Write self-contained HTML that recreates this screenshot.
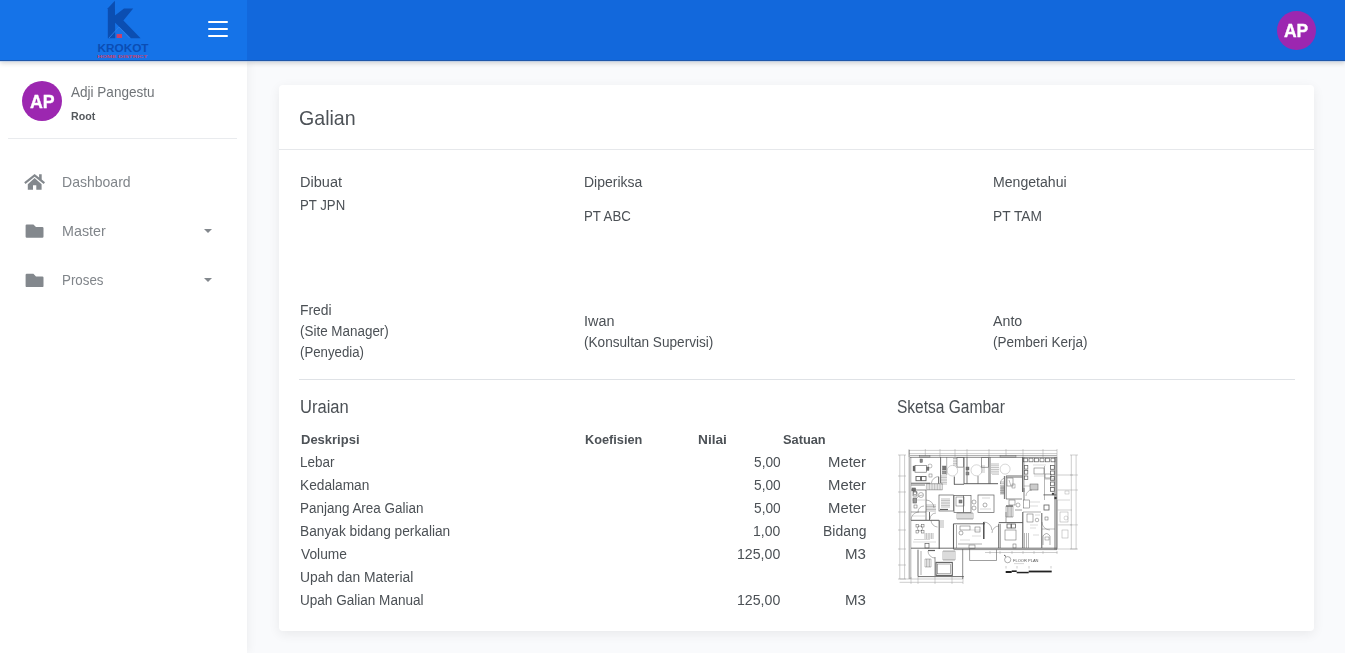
<!DOCTYPE html>
<html><head><meta charset="utf-8">
<style>
*{box-sizing:border-box;margin:0;padding:0}
html,body{width:1345px;height:653px;overflow:hidden}
body{background:#f9fafc;font-family:"Liberation Sans",sans-serif;color:#495057;position:relative}
#nav{position:absolute;left:0;top:0;width:1345px;height:61px;background:#1268dc;border-bottom:1px solid #1f57aa;box-shadow:0 2px 5px rgba(0,0,0,.18);z-index:5}
#brand{position:absolute;left:0;top:0;width:247px;height:60px;background:#1573e8}
#side{position:absolute;left:0;top:61px;width:247px;height:592px;background:#fff;box-shadow:1px 0 10px rgba(0,0,0,.06);z-index:2}
#card{position:absolute;left:279px;top:85px;width:1035px;height:546px;background:#fff;border-radius:4px;box-shadow:0 3px 12px rgba(0,0,0,.07)}
.t{position:absolute;white-space:nowrap;color:#52575c;z-index:10;transform-origin:0 0}
.av{position:absolute;width:40px;height:40px;border-radius:50%;background:#9c27b0}
.hb{position:absolute;left:208px;width:20px;height:2px;background:#fff;border-radius:1px}
.sv{position:absolute}
</style></head><body>
<div id="nav">
  <div id="brand">
    <svg class="sv" style="left:90px;top:0" width="66" height="61" viewBox="90 0 66 61">
      <g fill="#0b4eb2">
        <polygon points="107.8,8.2 114.9,0.8 115.2,38.2 107.8,38.2"/>
        <polygon points="114.9,15.6 124,8.6 133.2,8.6 123.4,20.6 140.6,38.2 131,38.2 114.9,22.4"/>
      </g>
      <polyline points="109,38 119,27 129.5,38" fill="none" stroke="#2f7fe6" stroke-width="0.9"/>
      <rect x="116.6" y="34" width="5.4" height="4" fill="#c9406a"/>
      <text x="123" y="52.3" text-anchor="middle" font-family="Liberation Sans" font-weight="bold" font-size="11.8" fill="#0b4db4" textLength="51" lengthAdjust="spacingAndGlyphs">KROKOT</text>
      <text x="97.3" y="57.6" font-family="Liberation Sans" font-weight="bold" font-size="4.2" fill="#c4426f" textLength="50" lengthAdjust="spacingAndGlyphs">HOME DISTRICT</text>
    </svg>
    <div class="hb" style="top:21px"></div>
    <div class="hb" style="top:28px"></div>
    <div class="hb" style="top:35px"></div>
  </div>
  <div class="av" style="left:1276.5px;top:10.5px;width:39.5px;height:39.5px"></div>
<!--NAVTEXT-->
</div>
<div style="position:absolute;left:0;top:61px;width:1345px;height:1px;background:rgba(150,190,245,.35);z-index:6"></div>
<div id="side">
  <div class="av" style="left:22px;top:20px"></div>
  <div style="position:absolute;left:8px;top:77px;width:229px;height:1px;background:#e9ebee"></div>
  <svg class="sv" style="left:20px;top:110px" width="30" height="30" viewBox="20 171 30 30">
    <g fill="#83888d">
      <polygon points="24.2,182.2 34.6,173.9 39.1,177.5 39.1,174.2 41.7,174.2 41.7,179.6 45,182.2 43.7,183.9 34.6,176.7 25.5,183.9"/>
      <polygon points="27.8,184.3 34.6,178.0 41.6,184.3 41.6,189.8 36.3,189.8 36.3,185.3 33,185.3 33,189.8 27.8,189.8"/>
    </g>
  </svg>
  <svg class="sv" style="left:20px;top:160px" width="30" height="30" viewBox="20 221 30 30">
    <path fill="#83888d" d="M25.6,225.6 a1.2,1.2 0 0 1 1.2,-1.2 h6.6 l2.6,2.6 h6.3 a1.2,1.2 0 0 1 1.2,1.2 v8.3 a1.2,1.2 0 0 1 -1.2,1.2 h-15.5 a1.2,1.2 0 0 1 -1.2,-1.2 z"/>
  </svg>
  <svg class="sv" style="left:20px;top:209px" width="30" height="30" viewBox="20 270 30 30">
    <path fill="#83888d" d="M25.6,275 a1.2,1.2 0 0 1 1.2,-1.2 h6.6 l2.6,2.6 h6.3 a1.2,1.2 0 0 1 1.2,1.2 v8.3 a1.2,1.2 0 0 1 -1.2,1.2 h-15.5 a1.2,1.2 0 0 1 -1.2,-1.2 z"/>
  </svg>
  <svg class="sv" style="left:200px;top:165px" width="16" height="10" viewBox="200 226 16 10">
    <polygon points="204,229 212,229 208,233" fill="#83888d"/>
  </svg>
  <svg class="sv" style="left:200px;top:214px" width="16" height="10" viewBox="200 275 16 10">
    <polygon points="204,278 212,278 208,282" fill="#83888d"/>
  </svg>
<!--SIDETEXT-->
</div>
<div id="card"></div>
<div style="position:absolute;left:279px;top:149px;width:1035px;height:1px;background:#e6e8eb"></div>
<div style="position:absolute;left:299px;top:379px;width:996px;height:1px;background:#dfe2e6"></div>
<svg class="sv" style="left:895px;top:445px;z-index:3;filter:blur(0.25px)" width="190" height="140" viewBox="895 445 190 140">
<g stroke="#5e5e5e" fill="none">
<line x1="909" y1="450.4" x2="1057" y2="450.4" stroke-width="0.5" stroke="#9a9a9a"/>
<line x1="909" y1="453.6" x2="1057" y2="453.6" stroke-width="0.5" stroke="#9a9a9a"/>
<line x1="909" y1="449" x2="909" y2="457" stroke-width="0.5" stroke="#9a9a9a"/>
<line x1="925.3" y1="449" x2="925.3" y2="457" stroke-width="0.5" stroke="#9a9a9a"/>
<line x1="940" y1="449" x2="940" y2="457" stroke-width="0.5" stroke="#9a9a9a"/>
<line x1="955" y1="449" x2="955" y2="457" stroke-width="0.5" stroke="#9a9a9a"/>
<line x1="967" y1="449" x2="967" y2="457" stroke-width="0.5" stroke="#9a9a9a"/>
<line x1="989" y1="449" x2="989" y2="457" stroke-width="0.5" stroke="#9a9a9a"/>
<line x1="1006" y1="449" x2="1006" y2="457" stroke-width="0.5" stroke="#9a9a9a"/>
<line x1="1023" y1="449" x2="1023" y2="457" stroke-width="0.5" stroke="#9a9a9a"/>
<line x1="1043" y1="449" x2="1043" y2="457" stroke-width="0.5" stroke="#9a9a9a"/>
<line x1="1057" y1="449" x2="1057" y2="457" stroke-width="0.5" stroke="#9a9a9a"/>
<line x1="899.8" y1="455" x2="899.8" y2="579" stroke-width="0.5" stroke="#9a9a9a"/>
<line x1="904.6" y1="455" x2="904.6" y2="579" stroke-width="0.5" stroke="#9a9a9a"/>
<line x1="898" y1="455" x2="906" y2="455" stroke-width="0.5" stroke="#9a9a9a"/>
<line x1="898" y1="476" x2="906" y2="476" stroke-width="0.5" stroke="#9a9a9a"/>
<line x1="898" y1="492" x2="906" y2="492" stroke-width="0.5" stroke="#9a9a9a"/>
<line x1="898" y1="512" x2="906" y2="512" stroke-width="0.5" stroke="#9a9a9a"/>
<line x1="898" y1="530" x2="906" y2="530" stroke-width="0.5" stroke="#9a9a9a"/>
<line x1="898" y1="549" x2="906" y2="549" stroke-width="0.5" stroke="#9a9a9a"/>
<line x1="898" y1="565" x2="906" y2="565" stroke-width="0.5" stroke="#9a9a9a"/>
<line x1="898" y1="579" x2="906" y2="579" stroke-width="0.5" stroke="#9a9a9a"/>
<line x1="1071.3" y1="455" x2="1071.3" y2="549" stroke-width="0.5" stroke="#9a9a9a"/>
<line x1="1076.1" y1="455" x2="1076.1" y2="549" stroke-width="0.5" stroke="#9a9a9a"/>
<line x1="1070" y1="455" x2="1078" y2="455" stroke-width="0.45" stroke="#9a9a9a"/>
<line x1="1070" y1="475" x2="1078" y2="475" stroke-width="0.45" stroke="#9a9a9a"/>
<line x1="1070" y1="490" x2="1078" y2="490" stroke-width="0.45" stroke="#9a9a9a"/>
<line x1="1070" y1="524.9" x2="1078" y2="524.9" stroke-width="0.45" stroke="#9a9a9a"/>
<line x1="1070" y1="549" x2="1078" y2="549" stroke-width="0.45" stroke="#9a9a9a"/>
<line x1="899.6" y1="579" x2="963" y2="579" stroke-width="0.5" stroke="#9a9a9a"/>
<line x1="899.6" y1="582.3" x2="963" y2="582.3" stroke-width="0.5" stroke="#9a9a9a"/>
<line x1="911" y1="577" x2="911" y2="584" stroke-width="0.45" stroke="#9a9a9a"/>
<line x1="918" y1="577" x2="918" y2="584" stroke-width="0.45" stroke="#9a9a9a"/>
<line x1="935" y1="577" x2="935" y2="584" stroke-width="0.45" stroke="#9a9a9a"/>
<line x1="952" y1="577" x2="952" y2="584" stroke-width="0.45" stroke="#9a9a9a"/>
<line x1="963" y1="577" x2="963" y2="584" stroke-width="0.45" stroke="#9a9a9a"/>
<line x1="985" y1="552.5" x2="1057.4" y2="552.5" stroke-width="0.5" stroke="#9a9a9a"/>
<line x1="990" y1="551" x2="990" y2="554" stroke-width="0.45" stroke="#9a9a9a"/>
<line x1="1000" y1="551" x2="1000" y2="554" stroke-width="0.45" stroke="#9a9a9a"/>
<line x1="1012" y1="551" x2="1012" y2="554" stroke-width="0.45" stroke="#9a9a9a"/>
<line x1="1023" y1="551" x2="1023" y2="554" stroke-width="0.45" stroke="#9a9a9a"/>
<line x1="1034" y1="551" x2="1034" y2="554" stroke-width="0.45" stroke="#9a9a9a"/>
<line x1="1043" y1="551" x2="1043" y2="554" stroke-width="0.45" stroke="#9a9a9a"/>
<line x1="1057" y1="551" x2="1057" y2="554" stroke-width="0.45" stroke="#9a9a9a"/>
<line x1="910" y1="455.7" x2="1056.8" y2="455.7" stroke-width="0.6"/>
<line x1="910" y1="457.5" x2="1056.8" y2="457.5" stroke-width="0.6"/>
<rect x="919.5" y="455.8" width="10.5" height="1.6" stroke-width="0.4" fill="#bbb"/>
<rect x="1000" y="455.8" width="16" height="1.6" stroke-width="0.4" fill="#bbb"/>
<line x1="909.2" y1="450" x2="909.2" y2="579" stroke-width="0.6"/>
<line x1="910.8" y1="457" x2="910.8" y2="579" stroke-width="0.5"/>
<line x1="1055" y1="457" x2="1055" y2="549.6" stroke-width="0.9"/>
<line x1="1056.8" y1="457" x2="1056.8" y2="549.6" stroke-width="0.9"/>
<line x1="911" y1="548.2" x2="1057" y2="548.2" stroke-width="0.9"/>
<line x1="953.5" y1="549.6" x2="1057" y2="549.6" stroke-width="0.7"/>
<line x1="918" y1="549.6" x2="918" y2="576.6" stroke-width="0.9"/>
<line x1="921" y1="551" x2="921" y2="575" stroke-width="0.5"/>
<line x1="918" y1="576.6" x2="963.9" y2="576.6" stroke-width="0.9"/>
<line x1="962.7" y1="549" x2="962.7" y2="579" stroke-width="0.7"/>
<line x1="1056.8" y1="475" x2="1073" y2="475" stroke-width="0.5" stroke="#9a9a9a"/>
<line x1="1057.4" y1="490" x2="1070" y2="490" stroke-width="0.5" stroke="#9a9a9a"/>
<line x1="1057.4" y1="524.9" x2="1072.3" y2="524.9" stroke-width="0.5" stroke="#9a9a9a"/>
<line x1="1057.4" y1="549" x2="1077" y2="549" stroke-width="0.5" stroke="#9a9a9a"/>
<rect x="1065" y="491" width="4" height="3" stroke-width="0.4" stroke="#9a9a9a"/>
<line x1="1057.4" y1="500" x2="1057.4" y2="549" stroke-width="0.5" stroke="#9a9a9a"/>
<rect x="915" y="465.3" width="11.4" height="6.9" stroke-width="0.6"/>
<rect x="913" y="466" width="2" height="5" stroke-width="0.3" fill="#666"/>
<rect x="926.5" y="467" width="2.5" height="3.5" stroke-width="0.3" fill="#777"/>
<rect x="920" y="459" width="2.5" height="3.5" stroke-width="0.4" fill="#888"/>
<rect x="916" y="476.5" width="4.5" height="4.2" stroke-width="0.9"/>
<rect x="921.5" y="476.5" width="4.5" height="4.2" stroke-width="0.9"/>
<line x1="911" y1="483.3" x2="930.2" y2="483.3" stroke-width="1.3" stroke="#888"/>
<path d="M931.4,483.3 A7.5,7.5 0 0 1 938.7,476.5" stroke-width="0.45"/>
<line x1="938.7" y1="476.8" x2="938.7" y2="483.7" stroke-width="1.0"/>
<line x1="926.4" y1="483.7" x2="926.4" y2="489.8" stroke-width="0.4"/>
<line x1="928.0" y1="483.7" x2="928.0" y2="489.8" stroke-width="0.4"/>
<line x1="929.6" y1="483.7" x2="929.6" y2="489.8" stroke-width="0.4"/>
<line x1="931.2" y1="483.7" x2="931.2" y2="489.8" stroke-width="0.4"/>
<line x1="932.8" y1="483.7" x2="932.8" y2="489.8" stroke-width="0.4"/>
<line x1="934.4" y1="483.7" x2="934.4" y2="489.8" stroke-width="0.4"/>
<line x1="936.0" y1="483.7" x2="936.0" y2="489.8" stroke-width="0.4"/>
<line x1="937.6" y1="483.7" x2="937.6" y2="489.8" stroke-width="0.4"/>
<line x1="939.2" y1="483.7" x2="939.2" y2="489.8" stroke-width="0.4"/>
<line x1="940.8" y1="483.7" x2="940.8" y2="489.8" stroke-width="0.4"/>
<line x1="942.4" y1="483.7" x2="942.4" y2="489.8" stroke-width="0.4"/>
<line x1="926.4" y1="483.7" x2="942.4" y2="483.7" stroke-width="0.5"/>
<line x1="926.4" y1="489.8" x2="942.4" y2="489.8" stroke-width="0.5"/>
<line x1="940.6" y1="457" x2="940.6" y2="483" stroke-width="0.9"/>
<line x1="946.7" y1="457" x2="946.7" y2="475" stroke-width="0.5"/>
<line x1="941" y1="476.0" x2="947" y2="476.0" stroke-width="0.4"/>
<line x1="941" y1="477.6" x2="947" y2="477.6" stroke-width="0.4"/>
<line x1="941" y1="479.2" x2="947" y2="479.2" stroke-width="0.4"/>
<line x1="941" y1="480.8" x2="947" y2="480.8" stroke-width="0.4"/>
<line x1="941" y1="482.4" x2="947" y2="482.4" stroke-width="0.4"/>
<line x1="941" y1="484.0" x2="947" y2="484.0" stroke-width="0.4"/>
<rect x="942.5" y="466" width="3.5" height="4" stroke-width="0.4" fill="#777"/>
<rect x="942.5" y="471" width="3.5" height="3" stroke-width="0.4" fill="#999"/>
<circle cx="952.4" cy="470.7" r="5.3" stroke-width="0.4" stroke="#9a9a9a"/>
<line x1="954.3" y1="476.5" x2="954.3" y2="484.5" stroke-width="1.0"/>
<line x1="954" y1="484.3" x2="964" y2="484.3" stroke-width="0.9"/>
<rect x="957" y="457.6" width="6.5" height="9.5" stroke-width="0.6"/>
<line x1="953" y1="458.5" x2="957" y2="458.5" stroke-width="0.4"/>
<line x1="953" y1="460.12" x2="957" y2="460.12" stroke-width="0.4"/>
<line x1="953" y1="461.75" x2="957" y2="461.75" stroke-width="0.4"/>
<line x1="953" y1="463.38" x2="957" y2="463.38" stroke-width="0.4"/>
<line x1="953" y1="465.0" x2="957" y2="465.0" stroke-width="0.4"/>
<line x1="964" y1="457" x2="964" y2="484" stroke-width="0.9"/>
<line x1="967" y1="457" x2="967" y2="484" stroke-width="0.8"/>
<rect x="966" y="467" width="3" height="3" stroke-width="0.4" fill="#777"/>
<rect x="966" y="472" width="3" height="3" stroke-width="0.4" fill="#888"/>
<circle cx="976.5" cy="470.3" r="5.5" stroke-width="0.4" stroke="#9a9a9a"/>
<rect x="981.4" y="457.7" width="7" height="9.5" stroke-width="0.6"/>
<line x1="981" y1="466.0" x2="985" y2="466.0" stroke-width="0.35"/>
<line x1="981" y1="468.0" x2="985" y2="468.0" stroke-width="0.35"/>
<line x1="981" y1="470.0" x2="985" y2="470.0" stroke-width="0.35"/>
<line x1="981" y1="472.0" x2="985" y2="472.0" stroke-width="0.35"/>
<line x1="989" y1="457" x2="989" y2="484" stroke-width="0.9"/>
<line x1="990.4" y1="457" x2="990.4" y2="484" stroke-width="0.5"/>
<line x1="964" y1="483.7" x2="998" y2="483.7" stroke-width="1.0"/>
<line x1="978" y1="476" x2="978" y2="484" stroke-width="0.7"/>
<line x1="991" y1="464.0" x2="999" y2="464.0" stroke-width="0.4"/>
<line x1="991" y1="465.8" x2="999" y2="465.8" stroke-width="0.4"/>
<line x1="991" y1="467.6" x2="999" y2="467.6" stroke-width="0.4"/>
<line x1="991" y1="469.4" x2="999" y2="469.4" stroke-width="0.4"/>
<line x1="991" y1="471.2" x2="999" y2="471.2" stroke-width="0.4"/>
<line x1="991" y1="473.0" x2="999" y2="473.0" stroke-width="0.4"/>
<line x1="992" y1="474.5" x2="999" y2="474.5" stroke-width="0.4" stroke="#9a9a9a"/>
<circle cx="1005.1" cy="469.1" r="5" stroke-width="0.4" stroke="#9a9a9a"/>
<line x1="1004.4" y1="476" x2="1004.4" y2="499" stroke-width="0.9"/>
<line x1="1006.2" y1="476" x2="1006.2" y2="499" stroke-width="0.7"/>
<line x1="1006" y1="476" x2="1022.5" y2="476" stroke-width="0.9"/>
<line x1="1006" y1="477.4" x2="1022.5" y2="477.4" stroke-width="0.5"/>
<path d="M1000.5,484 A6,6 0 0 1 1004.4,478" stroke-width="0.45"/>
<line x1="1000" y1="482.0" x2="1004" y2="482.0" stroke-width="0.4"/>
<line x1="1000" y1="483.71" x2="1004" y2="483.71" stroke-width="0.4"/>
<line x1="1000" y1="485.43" x2="1004" y2="485.43" stroke-width="0.4"/>
<line x1="1000" y1="487.14" x2="1004" y2="487.14" stroke-width="0.4"/>
<line x1="1000" y1="488.86" x2="1004" y2="488.86" stroke-width="0.4"/>
<line x1="1000" y1="490.57" x2="1004" y2="490.57" stroke-width="0.4"/>
<line x1="1000" y1="492.29" x2="1004" y2="492.29" stroke-width="0.4"/>
<line x1="1000" y1="494.0" x2="1004" y2="494.0" stroke-width="0.4"/>
<rect x="1007" y="478" width="6" height="8" stroke-width="0.5"/>
<line x1="1009" y1="480" x2="1011" y2="486" stroke-width="0.4"/>
<rect x="1012" y="484" width="3" height="4" stroke-width="0.4"/>
<line x1="1022.7" y1="457" x2="1022.7" y2="492" stroke-width="1.2"/>
<line x1="1024" y1="457" x2="1024" y2="492" stroke-width="0.5"/>
<rect x="1023.5" y="458.2" width="4" height="3.6" stroke-width="0.7"/>
<rect x="1029" y="458.2" width="4" height="3.6" stroke-width="0.7"/>
<rect x="1034.5" y="458.2" width="4" height="3.6" stroke-width="0.7"/>
<rect x="1040" y="458.2" width="4" height="3.6" stroke-width="0.7"/>
<rect x="1045.5" y="458.2" width="4" height="3.6" stroke-width="0.7"/>
<rect x="1051" y="458.2" width="4" height="3.6" stroke-width="0.7"/>
<rect x="1024.5" y="465.5" width="3.3" height="3.6" stroke-width="0.7"/>
<rect x="1024.5" y="470.5" width="3.3" height="3.6" stroke-width="0.7"/>
<rect x="1024.5" y="476" width="3.3" height="3.6" stroke-width="0.7"/>
<rect x="1050.5" y="465.5" width="3.8" height="3.8" stroke-width="0.8"/>
<rect x="1050.5" y="471" width="3.8" height="3.8" stroke-width="0.8"/>
<rect x="1050.5" y="476.5" width="3.8" height="3.8" stroke-width="0.8"/>
<rect x="1050.5" y="482" width="3.8" height="3.8" stroke-width="0.8"/>
<rect x="1050.5" y="487.5" width="3.8" height="3.8" stroke-width="0.8"/>
<rect x="1034" y="468" width="10" height="6" stroke-width="0.5"/>
<line x1="1033" y1="465" x2="1046" y2="465" stroke-width="0.35" stroke="#9a9a9a"/>
<line x1="1034" y1="476" x2="1044" y2="476" stroke-width="0.35" stroke="#9a9a9a"/>
<line x1="1044.5" y1="466" x2="1044.5" y2="500" stroke-width="0.45"/>
<rect x="1030" y="484" width="8" height="6" stroke-width="0.5" fill="#ccc"/>
<line x1="1024" y1="486" x2="1030" y2="486" stroke-width="0.35"/>
<rect x="1052" y="493" width="2" height="2" stroke-width="0.3" fill="#333"/>
<rect x="1054.5" y="497" width="2" height="2" stroke-width="0.3" fill="#333"/>
<line x1="1043.4" y1="494.9" x2="1056.3" y2="494.9" stroke-width="0.9"/>
<line x1="1024" y1="488" x2="1024" y2="500" stroke-width="0.8"/>
<path d="M1026,496 A6,6 0 0 1 1032,490" stroke-width="0.4"/>
<rect x="939" y="495" width="14.5" height="16" stroke-width="0.7"/>
<line x1="941" y1="499.0" x2="950" y2="499.0" stroke-width="0.4"/>
<line x1="941" y1="500.6" x2="950" y2="500.6" stroke-width="0.4"/>
<line x1="941" y1="502.2" x2="950" y2="502.2" stroke-width="0.4"/>
<line x1="941" y1="503.8" x2="950" y2="503.8" stroke-width="0.4"/>
<line x1="941" y1="505.4" x2="950" y2="505.4" stroke-width="0.4"/>
<line x1="941" y1="507.0" x2="950" y2="507.0" stroke-width="0.4"/>
<line x1="940" y1="509.5" x2="948" y2="509.5" stroke-width="1.2"/>
<rect x="954" y="495.5" width="17" height="17" stroke-width="0.7"/>
<rect x="956" y="497" width="8" height="9" stroke-width="0.5"/>
<circle cx="974" cy="502" r="2" stroke-width="0.5"/>
<circle cx="974" cy="508" r="2" stroke-width="0.5"/>
<line x1="963.5" y1="495.5" x2="963.5" y2="512.5" stroke-width="0.8"/>
<rect x="959" y="500" width="3" height="3" stroke-width="0.5" fill="#888"/>
<line x1="957.0" y1="513" x2="957.0" y2="519" stroke-width="0.45"/>
<line x1="959.0" y1="513" x2="959.0" y2="519" stroke-width="0.45"/>
<line x1="961.0" y1="513" x2="961.0" y2="519" stroke-width="0.45"/>
<line x1="963.0" y1="513" x2="963.0" y2="519" stroke-width="0.45"/>
<line x1="965.0" y1="513" x2="965.0" y2="519" stroke-width="0.45"/>
<line x1="967.0" y1="513" x2="967.0" y2="519" stroke-width="0.45"/>
<line x1="969.0" y1="513" x2="969.0" y2="519" stroke-width="0.45"/>
<line x1="971.0" y1="513" x2="971.0" y2="519" stroke-width="0.45"/>
<line x1="973.0" y1="513" x2="973.0" y2="519" stroke-width="0.45"/>
<line x1="957" y1="513" x2="973" y2="513" stroke-width="0.5"/>
<line x1="957" y1="519" x2="973" y2="519" stroke-width="0.5"/>
<rect x="978" y="495" width="16" height="17.5" stroke-width="0.7"/>
<circle cx="985" cy="505" r="2" stroke-width="0.5"/>
<line x1="980" y1="509" x2="991" y2="509" stroke-width="0.4" stroke="#9a9a9a"/>
<line x1="982" y1="498" x2="990" y2="498" stroke-width="0.4" stroke="#9a9a9a"/>
<line x1="1006.0" y1="506" x2="1006.0" y2="517" stroke-width="0.45"/>
<line x1="1007.4" y1="506" x2="1007.4" y2="517" stroke-width="0.45"/>
<line x1="1008.8" y1="506" x2="1008.8" y2="517" stroke-width="0.45"/>
<line x1="1010.2" y1="506" x2="1010.2" y2="517" stroke-width="0.45"/>
<line x1="1011.6" y1="506" x2="1011.6" y2="517" stroke-width="0.45"/>
<line x1="1013.0" y1="506" x2="1013.0" y2="517" stroke-width="0.45"/>
<line x1="1006" y1="506" x2="1013" y2="506" stroke-width="1.3"/>
<line x1="1006" y1="517" x2="1013" y2="517" stroke-width="0.5"/>
<path d="M930,519 A6,6 0 0 1 936,513" stroke-width="0.45"/>
<line x1="929.5" y1="512" x2="929.5" y2="520" stroke-width="0.9"/>
<line x1="926" y1="505.0" x2="936" y2="505.0" stroke-width="0.4"/>
<line x1="926" y1="506.5" x2="936" y2="506.5" stroke-width="0.4"/>
<line x1="926" y1="508.0" x2="936" y2="508.0" stroke-width="0.4"/>
<line x1="926" y1="509.5" x2="936" y2="509.5" stroke-width="0.4"/>
<line x1="926" y1="511.0" x2="936" y2="511.0" stroke-width="0.4"/>
<line x1="912" y1="500" x2="925" y2="500" stroke-width="0.4" stroke="#9a9a9a"/>
<rect x="912" y="488" width="3.5" height="3" stroke-width="0.6" fill="#777"/>
<rect x="913.5" y="491.5" width="3" height="3" stroke-width="0.5"/>
<path d="M915,503 A8,8 0 0 1 923,495" stroke-width="0.4"/>
<line x1="911" y1="485" x2="925" y2="485" stroke-width="0.8"/>
<line x1="911" y1="520.3" x2="939.2" y2="520.3" stroke-width="1.0"/>
<line x1="939.2" y1="520.3" x2="939.2" y2="549" stroke-width="1.1"/>
<circle cx="920" cy="528.5" r="2.5" stroke-width="0.5"/>
<rect x="916" y="524.5" width="2.5" height="2.5" stroke-width="0.5"/>
<rect x="921.5" y="524.5" width="2.5" height="2.5" stroke-width="0.5"/>
<rect x="916" y="530.5" width="2.5" height="2.5" stroke-width="0.5"/>
<rect x="921.5" y="530.5" width="2.5" height="2.5" stroke-width="0.5"/>
<line x1="925.0" y1="533" x2="925.0" y2="539" stroke-width="0.4"/>
<line x1="926.6" y1="533" x2="926.6" y2="539" stroke-width="0.4"/>
<line x1="928.2" y1="533" x2="928.2" y2="539" stroke-width="0.4"/>
<line x1="929.8" y1="533" x2="929.8" y2="539" stroke-width="0.4"/>
<line x1="931.4" y1="533" x2="931.4" y2="539" stroke-width="0.4"/>
<line x1="933.0" y1="533" x2="933.0" y2="539" stroke-width="0.4"/>
<line x1="914" y1="539.5" x2="930" y2="539.5" stroke-width="0.4" stroke="#9a9a9a"/>
<rect x="925" y="543.5" width="4" height="4.5" stroke-width="0.7"/>
<path d="M931,520.3 A7,7 0 0 0 937.5,527" stroke-width="0.45"/>
<line x1="940" y1="521.0" x2="944" y2="521.0" stroke-width="0.45"/>
<line x1="940" y1="523.0" x2="944" y2="523.0" stroke-width="0.45"/>
<line x1="940" y1="525.0" x2="944" y2="525.0" stroke-width="0.45"/>
<line x1="940" y1="527.0" x2="944" y2="527.0" stroke-width="0.45"/>
<line x1="913" y1="542" x2="936" y2="542" stroke-width="0.35" stroke="#9a9a9a"/>
<line x1="928" y1="550.5" x2="935" y2="550.5" stroke-width="1.2"/>
<path d="M928,551 A7,7 0 0 0 935,558" stroke-width="0.45"/>
<line x1="925.0" y1="559" x2="925.0" y2="567" stroke-width="0.4"/>
<line x1="926.5" y1="559" x2="926.5" y2="567" stroke-width="0.4"/>
<line x1="928.0" y1="559" x2="928.0" y2="567" stroke-width="0.4"/>
<line x1="929.5" y1="559" x2="929.5" y2="567" stroke-width="0.4"/>
<line x1="931.0" y1="559" x2="931.0" y2="567" stroke-width="0.4"/>
<line x1="925" y1="559" x2="931" y2="559" stroke-width="0.4"/>
<line x1="925" y1="567" x2="931" y2="567" stroke-width="0.4"/>
<line x1="935" y1="557" x2="935" y2="576" stroke-width="0.7"/>
<rect x="936" y="562.4" width="16.3" height="13" stroke-width="1.1"/>
<rect x="937.6" y="564" width="13.1" height="9.8" stroke-width="0.5"/>
<line x1="943.0" y1="551" x2="943.0" y2="560" stroke-width="0.45"/>
<line x1="945.0" y1="551" x2="945.0" y2="560" stroke-width="0.45"/>
<line x1="947.0" y1="551" x2="947.0" y2="560" stroke-width="0.45"/>
<line x1="949.0" y1="551" x2="949.0" y2="560" stroke-width="0.45"/>
<line x1="951.0" y1="551" x2="951.0" y2="560" stroke-width="0.45"/>
<line x1="953.0" y1="551" x2="953.0" y2="560" stroke-width="0.45"/>
<line x1="955.0" y1="551" x2="955.0" y2="560" stroke-width="0.45"/>
<line x1="943" y1="551" x2="955" y2="551" stroke-width="0.5"/>
<line x1="943" y1="560" x2="955" y2="560" stroke-width="0.5"/>
<line x1="953.5" y1="523.8" x2="953.5" y2="549" stroke-width="1.1"/>
<line x1="953.5" y1="523.8" x2="985" y2="523.8" stroke-width="0.9"/>
<line x1="956.5" y1="525" x2="956.5" y2="548" stroke-width="0.5"/>
<circle cx="961" cy="533" r="2" stroke-width="0.5"/>
<line x1="960" y1="540" x2="970" y2="540" stroke-width="0.35" stroke="#9a9a9a"/>
<line x1="970" y1="530" x2="980" y2="530" stroke-width="0.35" stroke="#9a9a9a"/>
<line x1="983.8" y1="522" x2="983.8" y2="539" stroke-width="1.4" stroke="#444"/>
<line x1="969.6" y1="549" x2="969.6" y2="560.5" stroke-width="0.6"/>
<line x1="969.6" y1="560.5" x2="996.5" y2="560.5" stroke-width="0.6"/>
<line x1="996.5" y1="549.6" x2="996.5" y2="560.5" stroke-width="0.6"/>
<rect x="969" y="545" width="6" height="3.5" stroke-width="0.5"/>
<path d="M983.8,522 A8,8 0 0 1 991.8,530" stroke-width="0.45"/>
<path d="M999,526 A7,7 0 0 0 992,533" stroke-width="0.45"/>
<line x1="998.8" y1="523.8" x2="998.8" y2="548" stroke-width="1.1"/>
<line x1="1000.5" y1="523.8" x2="1000.5" y2="548" stroke-width="0.5"/>
<line x1="998.8" y1="522.6" x2="1023" y2="522.6" stroke-width="1.0"/>
<rect x="1007" y="524" width="4" height="4" stroke-width="0.8"/>
<rect x="1011.5" y="524" width="4" height="4" stroke-width="0.8"/>
<rect x="1005" y="530" width="11" height="10" stroke-width="0.5"/>
<rect x="1013" y="544" width="3" height="4" stroke-width="0.5"/>
<line x1="1022.8" y1="512" x2="1022.8" y2="548" stroke-width="1.1"/>
<line x1="1024.5" y1="533" x2="1024.5" y2="548" stroke-width="0.45"/>
<line x1="1026.5" y1="533" x2="1026.5" y2="548" stroke-width="0.45"/>
<line x1="1028.5" y1="533" x2="1028.5" y2="548" stroke-width="0.45"/>
<line x1="1030" y1="525" x2="1038" y2="525" stroke-width="0.35" stroke="#9a9a9a"/>
<line x1="1030" y1="528" x2="1036" y2="528" stroke-width="0.35" stroke="#9a9a9a"/>
<line x1="1033" y1="535" x2="1039" y2="535" stroke-width="0.35" stroke="#9a9a9a"/>
<line x1="1041.8" y1="513" x2="1041.8" y2="548" stroke-width="1.0"/>
<line x1="1023" y1="512" x2="1041" y2="512" stroke-width="0.5"/>
<path d="M1043,545 L1043,536 Q1046.5,531 1050,536 L1050,545" stroke-width="0.5"/>
<rect x="1045" y="537" width="4" height="3" stroke-width="0.4"/>
<line x1="1042" y1="529" x2="1055" y2="529" stroke-width="0.4"/>
<rect x="1044" y="505" width="5" height="5" stroke-width="0.8"/>
<rect x="1045" y="517" width="3" height="3" stroke-width="0.5"/>
<path d="M1042,522 A8,8 0 0 0 1050,530" stroke-width="0.4"/>
<line x1="1006" y1="512" x2="1006" y2="522" stroke-width="0.6"/>
<line x1="911" y1="490" x2="926" y2="490" stroke-width="0.7"/>
<line x1="926" y1="490" x2="926" y2="520" stroke-width="0.8"/>
<line x1="911" y1="512" x2="926" y2="512" stroke-width="0.6"/>
<rect x="913" y="492" width="4" height="4" stroke-width="0.6"/>
<rect x="913" y="498" width="3.5" height="5" stroke-width="0.6" fill="#999"/>
<circle cx="921" cy="495" r="2.5" stroke-width="0.45"/>
<path d="M918,512 A6,6 0 0 1 924,506" stroke-width="0.45"/>
<rect x="914" y="505" width="3" height="3" stroke-width="0.5"/>
<line x1="912" y1="516" x2="925" y2="516" stroke-width="0.35" stroke="#9a9a9a"/>
<path d="M926,500 A8,8 0 0 1 934,508" stroke-width="0.45"/>
<path d="M911,520 A8,8 0 0 1 919,512" stroke-width="0.4"/>
<line x1="1006" y1="499" x2="1022" y2="499" stroke-width="0.7"/>
<rect x="1009" y="500" width="6" height="5" stroke-width="0.5"/>
<circle cx="1018" cy="505" r="2" stroke-width="0.45"/>
<line x1="1015" y1="510" x2="1022" y2="510" stroke-width="0.6"/>
<rect x="1023.5" y="500" width="6" height="8" stroke-width="0.5"/>
<line x1="1030" y1="502" x2="1040" y2="502" stroke-width="0.35" stroke="#9a9a9a"/>
<line x1="1030" y1="506" x2="1038" y2="506" stroke-width="0.35" stroke="#9a9a9a"/>
<rect x="960" y="526" width="10" height="4" stroke-width="0.5"/>
<line x1="958" y1="544" x2="982" y2="544" stroke-width="0.5"/>
<rect x="975" y="527" width="5" height="5" stroke-width="0.5"/>
<line x1="972" y1="536" x2="981" y2="536" stroke-width="0.35" stroke="#9a9a9a"/>
<rect x="1027" y="514" width="6" height="8" stroke-width="0.5"/>
<line x1="1035" y1="515" x2="1040" y2="515" stroke-width="0.35" stroke="#9a9a9a"/>
<circle cx="1037" cy="520" r="1.8" stroke-width="0.45"/>
<rect x="1045" y="474" width="6" height="4" stroke-width="0.5"/>
<line x1="1044.5" y1="479" x2="1055" y2="479" stroke-width="0.4"/>
<line x1="1001.0" y1="486" x2="1001.0" y2="494" stroke-width="0.4"/>
<line x1="1002.0" y1="486" x2="1002.0" y2="494" stroke-width="0.4"/>
<line x1="1003.0" y1="486" x2="1003.0" y2="494" stroke-width="0.4"/>
<line x1="1004.0" y1="486" x2="1004.0" y2="494" stroke-width="0.4"/>
<circle cx="930" cy="466" r="2" stroke-width="0.4"/>
<rect x="929" y="474" width="3" height="3" stroke-width="0.45"/>
<line x1="1057.4" y1="510" x2="1072" y2="510" stroke-width="0.45" stroke="#9a9a9a"/>
<rect x="1060" y="512" width="8" height="10" stroke-width="0.45" stroke="#9a9a9a"/>
<rect x="1062" y="530" width="6" height="8" stroke-width="0.45" stroke="#9a9a9a"/>
<line x1="1057.4" y1="500" x2="1070" y2="500" stroke-width="0.4" stroke="#9a9a9a"/>
<circle cx="1066" cy="518" r="2" stroke-width="0.4" stroke="#9a9a9a"/>
<circle cx="1007.7" cy="559.7" r="3.1" stroke-width="0.5"/>
<line x1="1004" y1="555" x2="1006" y2="556.5" stroke-width="0.8" stroke="#333"/>
<line x1="1014" y1="563.6" x2="1024" y2="563.6" stroke-width="0.4" stroke="#9a9a9a"/>
</g>
<rect x="1005.7" y="571" width="6" height="2" fill="#222"/><rect x="1011.7" y="570.4" width="5" height="1.6" fill="#222"/><rect x="1016.7" y="571.8" width="12" height="1.5" fill="#222"/><rect x="1028.7" y="570.6" width="23" height="1.8" fill="#222"/><line x1="1006" y1="566" x2="1006" y2="568.5" stroke="#999" stroke-width="0.5"/><line x1="1017" y1="566" x2="1017" y2="568.5" stroke="#999" stroke-width="0.5"/><line x1="1029" y1="566" x2="1029" y2="568.5" stroke="#999" stroke-width="0.5"/><line x1="1051" y1="566" x2="1051" y2="568.5" stroke="#999" stroke-width="0.5"/>
<text x="1013" y="562" font-family="Liberation Sans" font-size="4.4" fill="#555" textLength="25.5" lengthAdjust="spacingAndGlyphs">FLOOR  PLAN</text>
</svg>
<div class="t" style="left:299.23px;top:105.98px;font-size:20.2px;line-height:25.25px;color:#4d5257;transform:scaleX(0.9710);">Galian</div>
<div class="t" style="left:300.16px;top:174.00px;font-size:14.0px;line-height:17.5px;color:#4b5055;transform:scaleX(1.0384);">Dibuat</div>
<div class="t" style="left:300.26px;top:197.00px;font-size:14.0px;line-height:17.5px;color:#4b5055;transform:scaleX(0.9411);">PT JPN</div>
<div class="t" style="left:300.16px;top:302.00px;font-size:14.0px;line-height:17.5px;color:#4b5055;transform:scaleX(0.9923);">Fredi</div>
<div class="t" style="left:300.35px;top:323.00px;font-size:14.0px;line-height:17.5px;color:#4b5055;transform:scaleX(0.9589);">(Site Manager)</div>
<div class="t" style="left:300.35px;top:344.00px;font-size:14.0px;line-height:17.5px;color:#4b5055;transform:scaleX(0.9449);">(Penyedia)</div>
<div class="t" style="left:584.15px;top:174.20px;font-size:14.0px;line-height:17.5px;color:#4b5055;transform:scaleX(0.9980);">Diperiksa</div>
<div class="t" style="left:584.20px;top:208.00px;font-size:14.0px;line-height:17.5px;color:#4b5055;transform:scaleX(0.9453);">PT ABC</div>
<div class="t" style="left:584.47px;top:312.90px;font-size:14.0px;line-height:17.5px;color:#4b5055;transform:scaleX(1.0293);">Iwan</div>
<div class="t" style="left:584.10px;top:333.80px;font-size:14.0px;line-height:17.5px;color:#4b5055;transform:scaleX(0.9721);">(Konsultan Supervisi)</div>
<div class="t" style="left:992.84px;top:174.00px;font-size:14.0px;line-height:17.5px;color:#4b5055;transform:scaleX(1.0069);">Mengetahui</div>
<div class="t" style="left:992.87px;top:208.00px;font-size:14.0px;line-height:17.5px;color:#4b5055;transform:scaleX(0.9819);">PT TAM</div>
<div class="t" style="left:993.25px;top:313.00px;font-size:14.0px;line-height:17.5px;color:#4b5055;transform:scaleX(1.0150);">Anto</div>
<div class="t" style="left:992.80px;top:333.80px;font-size:14.0px;line-height:17.5px;color:#4b5055;transform:scaleX(0.9644);">(Pemberi Kerja)</div>
<div class="t" style="left:299.66px;top:396.20px;font-size:17.6px;line-height:22.0px;color:#4b5055;transform:scaleX(0.9392);">Uraian</div>
<div class="t" style="left:897.30px;top:396.11px;font-size:18px;line-height:22.5px;color:#4b5055;transform:scaleX(0.8628);">Sketsa Gambar</div>
<div class="t" style="left:301.15px;top:431.19px;font-size:13.6px;line-height:17.0px;color:#4d5257;transform:scaleX(0.9557);font-weight:bold;">Deskripsi</div>
<div class="t" style="left:584.70px;top:431.19px;font-size:13.6px;line-height:17.0px;color:#4d5257;transform:scaleX(0.9379);font-weight:bold;">Koefisien</div>
<div class="t" style="left:698.30px;top:431.19px;font-size:13.6px;line-height:17.0px;color:#4d5257;transform:scaleX(1.0061);font-weight:bold;">Nilai</div>
<div class="t" style="left:783.40px;top:431.19px;font-size:13.6px;line-height:17.0px;color:#4d5257;transform:scaleX(0.9419);font-weight:bold;">Satuan</div>
<div class="t" style="left:299.84px;top:453.80px;font-size:14.0px;line-height:17.5px;color:#4b5055;transform:scaleX(0.9617);">Lebar</div>
<div class="t" style="left:753.90px;top:453.80px;font-size:14.0px;line-height:17.5px;color:#4b5055;transform:scaleX(0.9795);">5,00</div>
<div class="t" style="left:827.64px;top:453.80px;font-size:14.0px;line-height:17.5px;color:#4b5055;transform:scaleX(1.0620);">Meter</div>
<div class="t" style="left:299.82px;top:476.77px;font-size:14.0px;line-height:17.5px;color:#4b5055;transform:scaleX(0.9791);">Kedalaman</div>
<div class="t" style="left:753.90px;top:476.77px;font-size:14.0px;line-height:17.5px;color:#4b5055;transform:scaleX(0.9795);">5,00</div>
<div class="t" style="left:827.64px;top:476.77px;font-size:14.0px;line-height:17.5px;color:#4b5055;transform:scaleX(1.0620);">Meter</div>
<div class="t" style="left:299.84px;top:499.74px;font-size:14.0px;line-height:17.5px;color:#4b5055;transform:scaleX(0.9614);">Panjang Area Galian</div>
<div class="t" style="left:753.90px;top:499.74px;font-size:14.0px;line-height:17.5px;color:#4b5055;transform:scaleX(0.9795);">5,00</div>
<div class="t" style="left:827.64px;top:499.74px;font-size:14.0px;line-height:17.5px;color:#4b5055;transform:scaleX(1.0620);">Meter</div>
<div class="t" style="left:299.82px;top:522.71px;font-size:14.0px;line-height:17.5px;color:#4b5055;transform:scaleX(0.9799);">Banyak bidang perkalian</div>
<div class="t" style="left:753.40px;top:522.71px;font-size:14.0px;line-height:17.5px;color:#4b5055;transform:scaleX(0.9977);">1,00</div>
<div class="t" style="left:822.70px;top:522.71px;font-size:14.0px;line-height:17.5px;color:#4b5055;transform:scaleX(0.9951);">Bidang</div>
<div class="t" style="left:300.80px;top:545.68px;font-size:14.0px;line-height:17.5px;color:#4b5055;transform:scaleX(0.9827);">Volume</div>
<div class="t" style="left:737.29px;top:545.68px;font-size:14.0px;line-height:17.5px;color:#4b5055;transform:scaleX(1.0111);">125,00</div>
<div class="t" style="left:844.82px;top:545.68px;font-size:14.0px;line-height:17.5px;color:#4b5055;transform:scaleX(1.0770);">M3</div>
<div class="t" style="left:299.81px;top:568.65px;font-size:14.0px;line-height:17.5px;color:#4b5055;transform:scaleX(0.9904);">Upah dan Material</div>
<div class="t" style="left:299.83px;top:591.62px;font-size:14.0px;line-height:17.5px;color:#4b5055;transform:scaleX(0.9682);">Upah Galian Manual</div>
<div class="t" style="left:737.29px;top:591.62px;font-size:14.0px;line-height:17.5px;color:#4b5055;transform:scaleX(1.0111);">125,00</div>
<div class="t" style="left:844.82px;top:591.62px;font-size:14.0px;line-height:17.5px;color:#4b5055;transform:scaleX(1.0770);">M3</div>
<div class="t" style="left:1284.00px;top:20.11px;font-size:17.8px;line-height:22.25px;color:#fff;transform:scaleX(0.9822);-webkit-text-stroke:0.35px #fff;font-weight:bold;">AP</div>
<div class="t" style="left:30.20px;top:91.21px;font-size:17.8px;line-height:22.25px;color:#fff;transform:scaleX(0.9983);-webkit-text-stroke:0.35px #fff;font-weight:bold;">AP</div>
<div class="t" style="left:71.00px;top:83.60px;font-size:14.2px;line-height:17.75px;color:#707478;transform:scaleX(0.9543);">Adji Pangestu</div>
<div class="t" style="left:71.20px;top:109.71px;font-size:10.8px;line-height:13.5px;color:#55595d;transform:scaleX(0.9885);font-weight:bold;">Root</div>
<div class="t" style="left:61.69px;top:173.89px;font-size:13.9px;line-height:17.38px;color:#80858a;transform:scaleX(1.0101);">Dashboard</div>
<div class="t" style="left:61.67px;top:223.39px;font-size:13.9px;line-height:17.38px;color:#80858a;transform:scaleX(1.0305);">Master</div>
<div class="t" style="left:61.74px;top:272.39px;font-size:13.9px;line-height:17.38px;color:#80858a;transform:scaleX(0.9601);">Proses</div>
</body></html>
